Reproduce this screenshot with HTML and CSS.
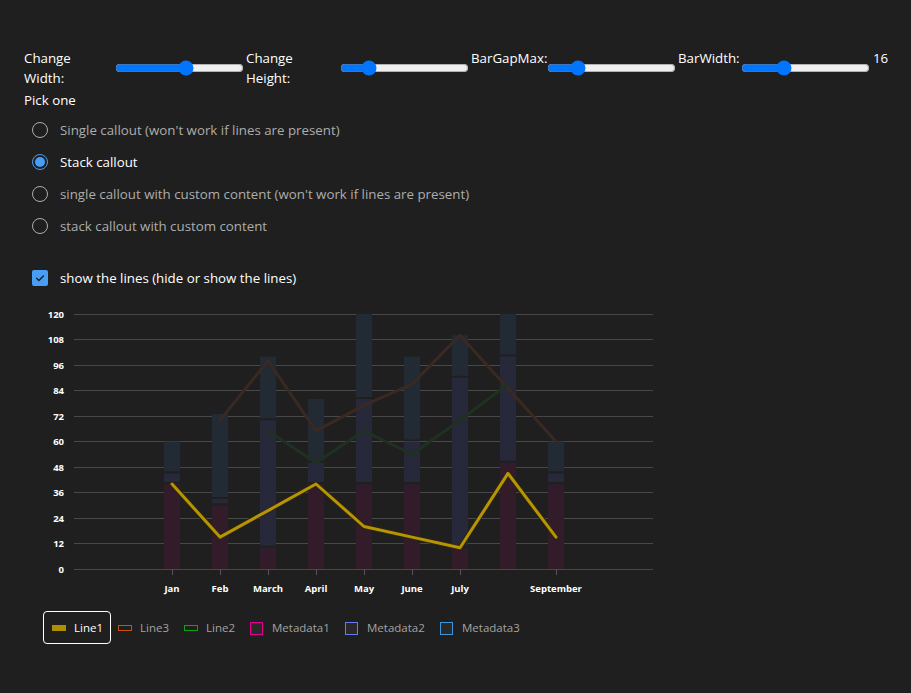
FILE: index.html
```html
<!DOCTYPE html>
<html lang="en">
<head>
<meta charset="utf-8">
<title>Vertical stacked bar chart</title>
<link rel="stylesheet" href="styles.css">
</head>
<body>
<div class="page">
  <div class="controls">
    <label class="ctl-label w1">Change<br>Width:</label>
    <input class="range" type="range" min="0" max="100" value="56">
    <label class="ctl-label w2">Change<br>Height:</label>
    <input class="range" type="range" min="0" max="100" value="19">
    <label class="ctl-label w3">BarGapMax:</label>
    <input class="range" type="range" min="0" max="100" value="20">
    <label class="ctl-label w4">BarWidth:</label>
    <input class="range" type="range" min="1" max="50" value="16">
    <span class="ctl-value">16</span>
  </div>

  <div class="pick">Pick one</div>

  <div class="radio-group" role="radiogroup">
    <div class="radio"><span class="radio-ind"></span><span class="radio-label">Single callout (won't work if lines are present)</span></div>
    <div class="radio checked"><span class="radio-ind"></span><span class="radio-label">Stack callout</span></div>
    <div class="radio"><span class="radio-ind"></span><span class="radio-label">single callout with custom content (won't work if lines are present)</span></div>
    <div class="radio"><span class="radio-ind"></span><span class="radio-label">stack callout with custom content</span></div>
  </div>

  <div class="checkbox">
    <span class="cb-ind"><svg width="12" height="12" viewBox="0 0 12 12"><path d="M2.6 6.3 L4.9 8.5 L9.4 3.9" fill="none" stroke="#1f1f1f" stroke-width="1.4" stroke-linecap="round" stroke-linejoin="round"/></svg></span>
    <span class="cb-label">show the lines (hide or show the lines)</span>
  </div>

  <svg class="chart" width="650" height="300" viewBox="0 0 650 300">
    <g class="grid" shape-rendering="crispEdges">
      <line x1="50" x2="629" y1="14" y2="14"/>
      <line x1="50" x2="629" y1="39.5" y2="39.5"/>
      <line x1="50" x2="629" y1="65" y2="65"/>
      <line x1="50" x2="629" y1="90.5" y2="90.5"/>
      <line x1="50" x2="629" y1="116" y2="116"/>
      <line x1="50" x2="629" y1="141.5" y2="141.5"/>
      <line x1="50" x2="629" y1="167" y2="167"/>
      <line x1="50" x2="629" y1="192.5" y2="192.5"/>
      <line x1="50" x2="629" y1="218" y2="218"/>
      <line x1="50" x2="629" y1="243.5" y2="243.5"/>
      <line x1="50" x2="629" y1="269" y2="269"/>
    </g>
    <g class="ylabels">
      <text x="40" y="17.5">120</text>
      <text x="40" y="43">108</text>
      <text x="40" y="68.5">96</text>
      <text x="40" y="94">84</text>
      <text x="40" y="119.5">72</text>
      <text x="40" y="145">60</text>
      <text x="40" y="170.5">48</text>
      <text x="40" y="196">36</text>
      <text x="40" y="221.5">24</text>
      <text x="40" y="247">12</text>
      <text x="40" y="272.5">0</text>
    </g>
    <g class="ticks" shape-rendering="crispEdges">
      <line x1="148" x2="148" y1="269" y2="275"/>
      <line x1="196" x2="196" y1="269" y2="275"/>
      <line x1="244" x2="244" y1="269" y2="275"/>
      <line x1="292" x2="292" y1="269" y2="275"/>
      <line x1="340" x2="340" y1="269" y2="275"/>
      <line x1="388" x2="388" y1="269" y2="275"/>
      <line x1="436" x2="436" y1="269" y2="275"/>
      <line x1="532" x2="532" y1="269" y2="275"/>
    </g>
    <g class="xlabels">
      <text x="148" y="292">Jan</text>
      <text x="196" y="292">Feb</text>
      <text x="244" y="292">March</text>
      <text x="292" y="292">April</text>
      <text x="340" y="292">May</text>
      <text x="388" y="292">June</text>
      <text x="436" y="292">July</text>
      <text x="532" y="292">September</text>
    </g>
    <g class="bars">
      <rect class="m3" x="140" y="141.5" width="16" height="29.9"/>
      <rect class="m2" x="140" y="173.4" width="16" height="8.6"/>
      <rect class="m1" x="140" y="184" width="16" height="85"/>

      <rect class="m3" x="188" y="113.9" width="16" height="83"/>
      <rect class="m2" x="188" y="198.9" width="16" height="4.35"/>
      <rect class="m1" x="188" y="205.25" width="16" height="63.75"/>

      <rect class="m3" x="236" y="56.5" width="16" height="61.75"/>
      <rect class="m2" x="236" y="120.25" width="16" height="125.5"/>
      <rect class="m1" x="236" y="247.75" width="16" height="21.25"/>

      <rect class="m3" x="284" y="99" width="16" height="61.75"/>
      <rect class="m2" x="284" y="162.75" width="16" height="19.25"/>
      <rect class="m1" x="284" y="184" width="16" height="85"/>

      <rect class="m3" x="332" y="14" width="16" height="83"/>
      <rect class="m2" x="332" y="99" width="16" height="83"/>
      <rect class="m1" x="332" y="184" width="16" height="85"/>

      <rect class="m3" x="380" y="56.5" width="16" height="83"/>
      <rect class="m2" x="380" y="141.5" width="16" height="40.5"/>
      <rect class="m1" x="380" y="184" width="16" height="85"/>

      <rect class="m3" x="428" y="35.25" width="16" height="40.5"/>
      <rect class="m2" x="428" y="77.75" width="16" height="168"/>
      <rect class="m1" x="428" y="247.75" width="16" height="21.25"/>

      <rect class="m3" x="476" y="14" width="16" height="40.5"/>
      <rect class="m2" x="476" y="56.5" width="16" height="104.25"/>
      <rect class="m1" x="476" y="162.75" width="16" height="106.25"/>

      <rect class="m3" x="524" y="141.5" width="16" height="29.9"/>
      <rect class="m2" x="524" y="173.4" width="16" height="8.6"/>
      <rect class="m1" x="524" y="184" width="16" height="85"/>
    </g>
    <g class="lines">
      <polyline class="line3" points="196,120.25 244,60.75 292,130.9 340,105.4 388,84.1 436,35.25 484,88.4 532,141.5"/>
      <polyline class="line2" points="244,130.9 292,162.75 340,130.9 388,154.25 436,120.25 484,84.1"/>
      <polyline class="line1-shadow" points="148,184 196,237.1 244,210.6 292,184 340,226.5 388,237.1 436,247.75 484,173.4 532,237.1"/>
      <polyline class="line1" points="148,184 196,237.1 244,210.6 292,184 340,226.5 388,237.1 436,247.75 484,173.4 532,237.1"/>
    </g>
  </svg>

  <div class="legend">
    <div class="legend-item focused w-line"><span class="sw sw-line sw-line1"></span><span class="legend-text">Line1</span></div>
    <div class="legend-item w-line"><span class="sw sw-line sw-line3"></span><span class="legend-text">Line3</span></div>
    <div class="legend-item w-line"><span class="sw sw-line sw-line2"></span><span class="legend-text">Line2</span></div>
    <div class="legend-item w-meta"><span class="sw sw-sq sw-m1"></span><span class="legend-text">Metadata1</span></div>
    <div class="legend-item w-meta"><span class="sw sw-sq sw-m2"></span><span class="legend-text">Metadata2</span></div>
    <div class="legend-item"><span class="sw sw-sq sw-m3"></span><span class="legend-text">Metadata3</span></div>
  </div>
</div>
</body>
</html>
```

FILE: styles.css
```css
html, body {
  margin: 0;
  padding: 0;
  background: #1f1f1f;
}

body {
  font-family: "Open Sans", "Noto Sans", sans-serif;
  font-size: 13.3px;
  color: #ffffff;
}

.page {
  padding: 48px 24px 48px 24px;
}

.controls {
  display: flex;
  align-items: stretch;
  width: 863px;
}

.ctl-label {
  line-height: 20px;
  color: #ffffff;
  flex: 0 0 auto;
  white-space: nowrap;
}

.w1 { width: 89px; }
.w2 { width: 92px; }
.w3 { width: 74px; }
.w4 { width: 61px; }

.range {
  width: 129px;
  margin: 2px;
  flex: 0 0 auto;
}

.ctl-value {
  line-height: 20px;
  margin-left: 1px;
}

.pick {
  margin-top: 2px;
  line-height: 20px;
}

.radio-group {
  margin-top: 4px;
  display: flex;
  flex-direction: column;
}

.radio {
  height: 32px;
  display: flex;
  align-items: center;
}

.radio-ind {
  box-sizing: border-box;
  width: 16px;
  height: 16px;
  margin-left: 8px;
  border: 1px solid #adadad;
  border-radius: 50%;
  display: flex;
  align-items: center;
  justify-content: center;
  flex: 0 0 auto;
}

.radio-label {
  margin-left: 12px;
  color: #adadad;
  line-height: 20px;
}

.radio.checked .radio-ind {
  border-color: #479ef5;
}

.radio.checked .radio-ind::after {
  content: "";
  width: 10px;
  height: 10px;
  border-radius: 50%;
  background: #479ef5;
}

.radio.checked .radio-label {
  color: #ffffff;
}

.checkbox {
  margin-top: 20px;
  height: 32px;
  display: flex;
  align-items: center;
}

.cb-ind {
  width: 16px;
  height: 16px;
  margin-left: 8px;
  border-radius: 2px;
  background: #479ef5;
  display: flex;
  align-items: center;
  justify-content: center;
  flex: 0 0 auto;
}

.cb-ind svg {
  display: block;
}

.cb-label {
  margin-left: 12px;
  line-height: 20px;
  color: #ffffff;
}

.chart {
  display: block;
  margin-top: 6px;
}

.grid line {
  stroke: #484848;
  stroke-width: 1;
}

.ticks line {
  stroke: #555555;
  stroke-width: 1;
}

.ylabels text {
  font-family: "Open Sans", sans-serif;
  font-weight: 700;
  font-size: 9.5px;
  fill: #ffffff;
  text-anchor: end;
}

.xlabels text {
  font-family: "Open Sans", sans-serif;
  font-weight: 700;
  font-size: 9.5px;
  fill: #ffffff;
  text-anchor: middle;
}

.m1 { fill: #331c2a; }
.m2 { fill: #27293b; }
.m3 { fill: #222b33; }

.lines polyline {
  fill: none;
  stroke-linejoin: round;
  stroke-linecap: round;
}

.line3 {
  stroke: #3a2922;
  stroke-width: 3;
}

.line2 {
  stroke: #1f3120;
  stroke-width: 3;
}

.line1-shadow {
  stroke: #2a2616;
  stroke-width: 5;
}

.line1 {
  stroke: #b89500;
  stroke-width: 3;
}

.legend {
  margin-top: 21px;
  margin-left: 28px;
  display: flex;
  align-items: center;
  height: 14px;
}

.legend-item {
  position: relative;
  display: flex;
  align-items: center;
  gap: 8px;
  flex: 0 0 auto;
  height: 14px;
}

.w-line { width: 66px; }
.w-meta { width: 95px; }

.legend-item.focused::after {
  content: "";
  position: absolute;
  top: -10px;
  bottom: -9px;
  left: -9px;
  right: 7px;
  border: 1px solid #ffffff;
  border-radius: 4px;
}

.sw {
  box-sizing: border-box;
  flex: 0 0 auto;
}

.sw-line {
  width: 14px;
  height: 6px;
  border: 1px solid;
}

.sw-line1 { background: #ad8f00; border-color: #ad8f00; }
.sw-line3 { border-color: #ca5010; }
.sw-line2 { border-color: #13a10e; }

.sw-sq {
  width: 13px;
  height: 13px;
  border: 1px solid;
  background: #292929;
  margin-right: 1px;
}

.sw-m1 { border-color: #e3008c; }
.sw-m2 { border-color: #637cef; }
.sw-m3 { border-color: #3a96dd; }

.legend-text {
  font-size: 11.5px;
  line-height: 14px;
  color: #a3a3a3;
  white-space: nowrap;
}

.focused .legend-text {
  color: #ffffff;
}
```
